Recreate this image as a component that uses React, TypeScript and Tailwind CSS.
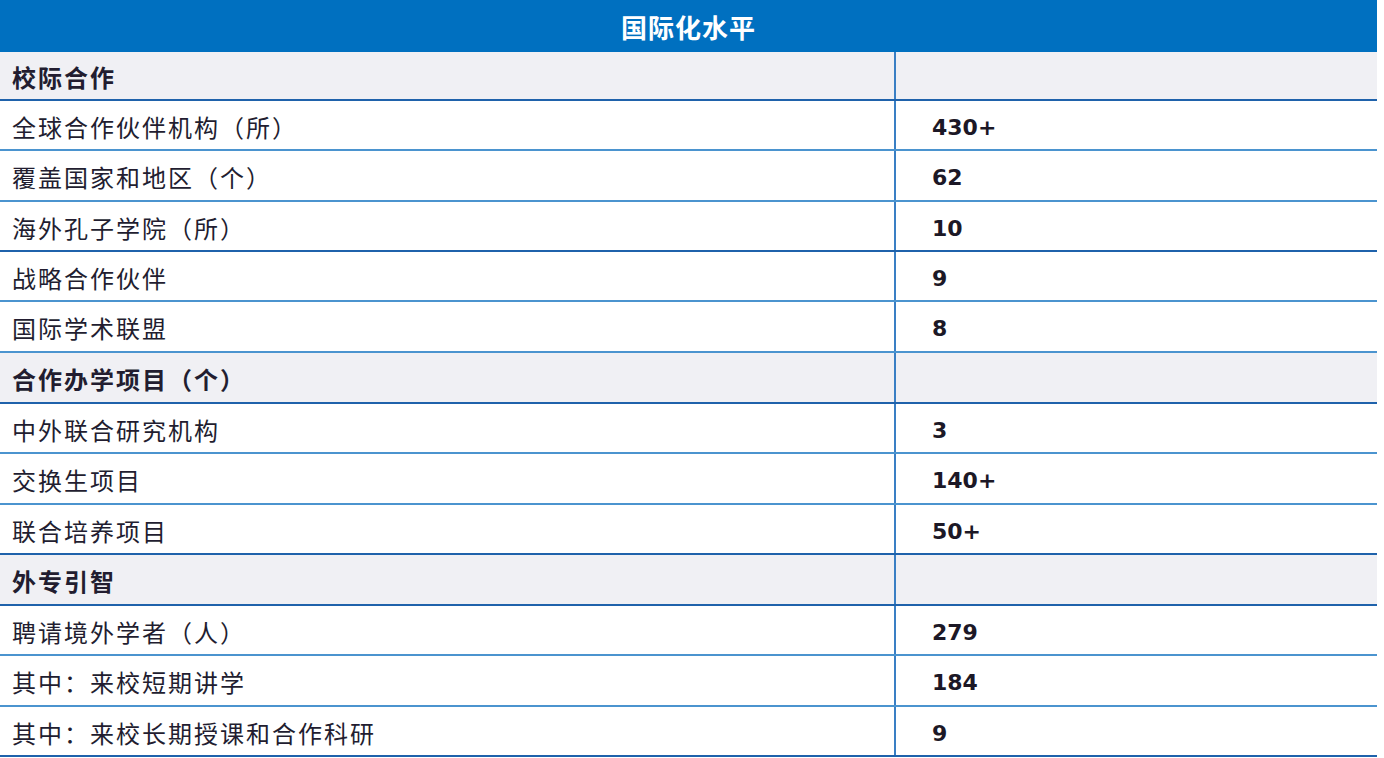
const rows: { label: string; value?: string; section?: boolean; h: string; thick?: boolean }[] = [
  { label: "校际合作", section: true, h: "h-[49px]", thick: true },
  { label: "全球合作伙伴机构（所）", value: "430+", h: "h-[50px]" },
  { label: "覆盖国家和地区（个）", value: "62", h: "h-[51px]" },
  { label: "海外孔子学院（所）", value: "10", h: "h-[50px]", thick: true },
  { label: "战略合作伙伴", value: "9", h: "h-[50px]" },
  { label: "国际学术联盟", value: "8", h: "h-[51px]" },
  { label: "合作办学项目（个）", section: true, h: "h-[51px]", thick: true },
  { label: "中外联合研究机构", value: "3", h: "h-[50px]" },
  { label: "交换生项目", value: "140+", h: "h-[51px]" },
  { label: "联合培养项目", value: "50+", h: "h-[50px]", thick: true },
  { label: "外专引智", section: true, h: "h-[51px]", thick: true },
  { label: "聘请境外学者（人）", value: "279", h: "h-[50px]" },
  { label: "其中：来校短期讲学", value: "184", h: "h-[51px]" },
  { label: "其中：来校长期授课和合作科研", value: "9", h: "h-[50px]", thick: true },
];

export default function App() {
  return (
    <div className="h-[758px] w-[1384px] overflow-hidden bg-white font-['Noto_Sans_CJK_SC',sans-serif] text-[#221d30]">
      <div className="w-[1377px]">
        <div className="flex h-[52px] items-center justify-center bg-[#0070c0] pt-[1px] text-[26px] font-bold tracking-[1px] text-white">
          国际化水平
        </div>
        {rows.map((row) => (
          <div
            key={row.label}
            className={`flex ${row.h} ${row.section ? "bg-[#f0f0f4]" : "bg-white"} ${
              row.thick ? "border-b-2 border-[#1f62ab]" : "border-b-2 border-[#4b94cf]"
            }`}
          >
            <div
              className={`flex w-[896px] shrink-0 items-center border-r-2 border-[#3a7fc4] pl-[12px] pt-[3px] text-[24px] tracking-[2px] ${
                row.section ? "font-bold" : "font-normal"
              }`}
            >
              {row.label}
            </div>
            <div className="flex flex-1 items-center pl-[36px] pt-[4px] font-['DejaVu_Sans',sans-serif] text-[22px] font-bold text-[#1c1826]">
              {row.value}
            </div>
          </div>
        ))}
      </div>
    </div>
  );
}
